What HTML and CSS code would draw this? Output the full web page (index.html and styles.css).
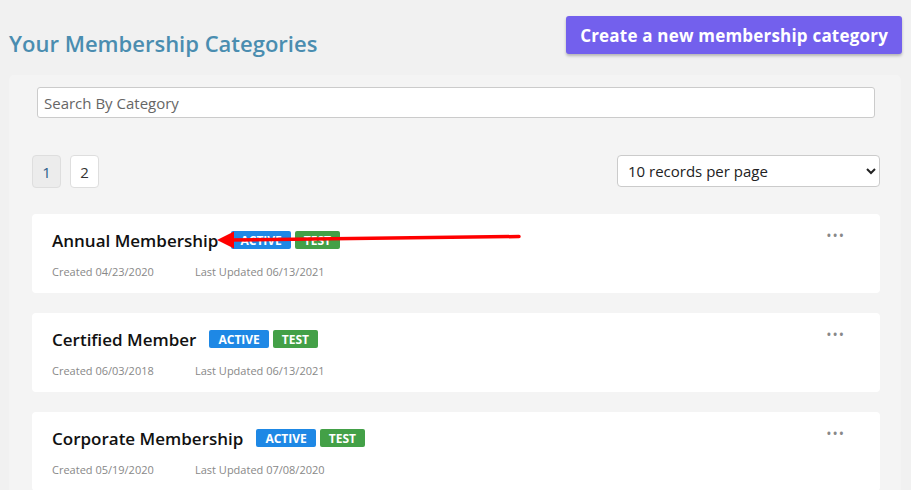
FILE: index.html
```html
<!DOCTYPE html>
<html>
<head>
<meta charset="utf-8">
<link rel="stylesheet" href="styles.css">
</head>
<body>
<div class="page">
  <header class="header">
    <h1 class="title">Your Membership Categories</h1>
    <button class="create-btn">Create a new membership category</button>
  </header>
  <main class="panel">
    <div class="search-wrap">
      <input class="search" type="text" placeholder="Search By Category">
    </div>
    <div class="toolbar">
      <div class="pager">
        <span class="page-btn current">1</span>
        <span class="page-btn">2</span>
      </div>
      <select class="per-page">
        <option>10 records per page</option>
      </select>
    </div>
    <div class="cards">
      <div class="card">
        <div class="card-main">
          <div class="card-head">
            <span class="card-title">Annual Membership</span>
            <span class="badge active">ACTIVE</span>
            <span class="badge test">TEST</span>
          </div>
          <div class="meta">
            <span class="created">Created 04/23/2020</span>
            <span>Last Updated 06/13/2021</span>
          </div>
        </div>
        <span class="dots">&bull;&bull;&bull;</span>
      </div>
      <div class="card">
        <div class="card-main">
          <div class="card-head">
            <span class="card-title">Certified Member</span>
            <span class="badge active">ACTIVE</span>
            <span class="badge test">TEST</span>
          </div>
          <div class="meta">
            <span class="created">Created 06/03/2018</span>
            <span>Last Updated 06/13/2021</span>
          </div>
        </div>
        <span class="dots">&bull;&bull;&bull;</span>
      </div>
      <div class="card">
        <div class="card-main">
          <div class="card-head">
            <span class="card-title">Corporate Membership</span>
            <span class="badge active">ACTIVE</span>
            <span class="badge test">TEST</span>
          </div>
          <div class="meta">
            <span class="created">Created 05/19/2020</span>
            <span>Last Updated 07/08/2020</span>
          </div>
        </div>
        <span class="dots">&bull;&bull;&bull;</span>
      </div>
    </div>
  </main>
  <svg class="arrow" width="911" height="490" viewBox="0 0 911 490">
    <line x1="519" y1="236.5" x2="228" y2="240" stroke="#f00" stroke-width="3.5" stroke-linecap="round"/>
    <polygon points="217,240 234,231.5 234,248.5" fill="#f00"/>
  </svg>
</div>
</body>
</html>
```
FILE: styles.css
```css
* { box-sizing: border-box; }
html, body { margin: 0; padding: 0; }
body {
  background: #f1f1f1;
  font-family: "Open Sans", "Liberation Sans", sans-serif;
  width: 911px;
  height: 490px;
  overflow: hidden;
}
.page { position: relative; }
.header {
  display: flex;
  justify-content: space-between;
  align-items: flex-start;
  padding: 16px 9px 0 9px;
  height: 75px;
}
.title {
  margin: 12px 0 0 0;
  font-size: 22px;
  font-weight: 600;
  color: #4a8db0;
  line-height: 30px;
}
.create-btn {
  height: 38px;
  padding: 0 14px;
  border: none;
  border-radius: 3px;
  background: #7360ed;
  color: #fff;
  font-family: "Open Sans", "Liberation Sans", sans-serif;
  font-size: 17px;
  font-weight: 700;
  letter-spacing: 0.2px;
  box-shadow: 0 2px 3px rgba(0,0,0,0.25);
}
.panel {
  margin: 0 10px 0 9px;
  background: #f4f4f4;
  border-radius: 5px;
  padding: 12px 21px 20px 23px;
}
.search-wrap { padding: 0 5px; }
.search {
  display: block;
  width: 100%;
  height: 31px;
  border: 1px solid #cbcbcb;
  border-radius: 3px;
  padding: 0 6px;
  font-family: "Open Sans", "Liberation Sans", sans-serif;
  font-size: 15px;
  background: #fff;
}
.search::placeholder { color: #666; }
.toolbar {
  display: flex;
  justify-content: space-between;
  align-items: flex-start;
  margin-top: 37px;
}
.pager { display: flex; gap: 9px; }
.page-btn {
  width: 29px;
  height: 33px;
  display: flex;
  align-items: center;
  justify-content: center;
  border: 1px solid #dedede;
  border-radius: 4px;
  background: #fff;
  font-size: 15px;
  color: #333;
}
.page-btn.current { background: #ececec; color: #2b5d8a; }
.per-page {
  width: 263px;
  height: 32px;
  border: 1px solid #cbcbcb;
  border-radius: 4px;
  background: #fff;
  font-family: "Open Sans", "Liberation Sans", sans-serif;
  font-size: 15px;
  color: #222;
  padding: 0 6px;
}
.cards {
  display: flex;
  flex-direction: column;
  gap: 20px;
  margin-top: 26px;
}
.card {
  background: #fff;
  border-radius: 4px;
  height: 79px;
  display: flex;
  justify-content: space-between;
  padding: 14px 35px 0 20px;
}
.card-head {
  display: flex;
  align-items: center;
  height: 24px;
}
.card-title {
  font-size: 17px;
  font-weight: 600;
  color: #111;
  margin-right: 13px;
}
.badge {
  height: 18px;
  display: inline-flex;
  align-items: center;
  padding: 0 9px;
  border-radius: 2px;
  color: #fff;
  font-size: 12px;
  font-weight: 700;
  margin-right: 4px;
}
.badge.active { background: #1e88e5; }
.badge.test { background: #43a047; }
.meta {
  margin-top: 12px;
  font-size: 11px;
  color: #888;
  display: flex;
}
.created { width: 143px; }
.dots {
  color: #888;
  font-size: 14px;
  letter-spacing: 1px;
  line-height: 14px;
  margin-top: 1px;
}
.arrow {
  position: absolute;
  left: 0;
  top: 0;
  pointer-events: none;
}
```
